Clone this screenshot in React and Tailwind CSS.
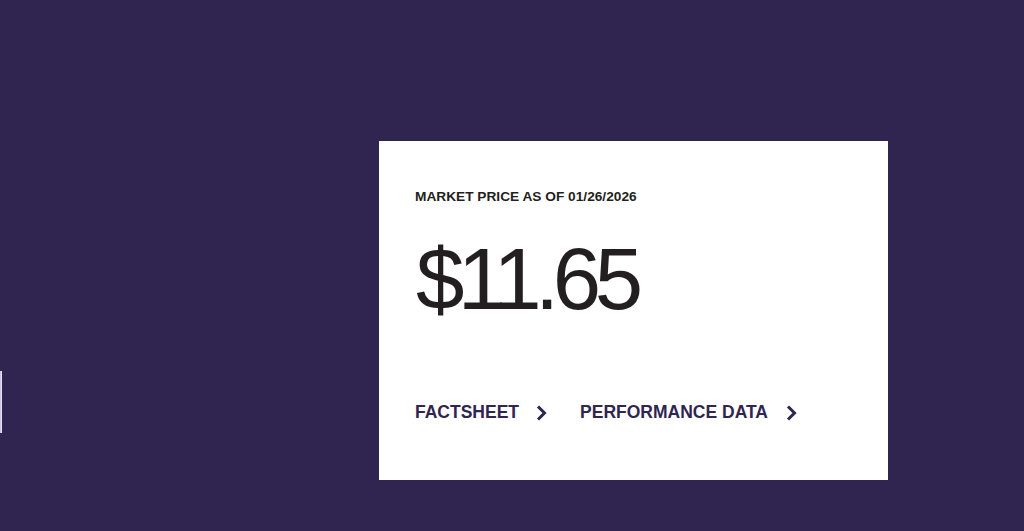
import React from "react";

const Chevron = () => (
  <svg width="13" height="18" viewBox="0 0 13 18" fill="none" className="shrink-0">
    <path d="M3 2.5L9.5 9L3 15.5" stroke="#2f2550" strokeWidth="3" />
  </svg>
);

const App = () => {
  return (
    <div
      className="w-full h-[531px] bg-[#2f2550] flex items-start overflow-hidden"
      style={{ fontFamily: '"Liberation Sans", Arial, sans-serif' }}
    >
      <div className="mt-[371px] w-[2px] h-[62px] bg-[#c9c3e4] border-r border-[#e7e3f5] shrink-0" />
      <div className="ml-[377px] mt-[141px] w-[509px] h-[339px] bg-white pl-[36px] pt-[48px] shrink-0">
        <p className="text-[13.7px] leading-[16px] font-bold text-[#231f20]">
          MARKET PRICE AS OF 01/26/2026
        </p>
        <p className="mt-[30px] pl-[1px] text-[87px] leading-[87px] tracking-[-0.075em] text-[#231f20]">
          $11.65
        </p>
        <div className="mt-[80px] flex items-center text-[17.5px] leading-[21px] font-bold text-[#2f2550]">
          <a className="flex items-center gap-[16px]">
            <span>FACTSHEET</span>
            <Chevron />
          </a>
          <a className="ml-[32px] flex items-center gap-[17px]">
            <span>PERFORMANCE DATA</span>
            <Chevron />
          </a>
        </div>
      </div>
    </div>
  );
};

export default App;
